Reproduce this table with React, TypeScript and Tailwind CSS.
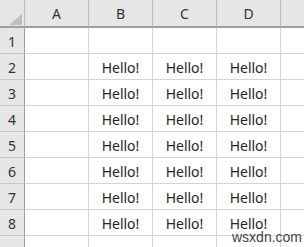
import React from "react";

const cols = ["A", "B", "C", "D"];
const rows = [1, 2, 3, 4, 5, 6, 7, 8];

const App: React.FC = () => {
  return (
    <div className="relative w-[304px] h-[247px] overflow-hidden bg-white font-['Noto_Sans',sans-serif] text-[#262626]">
      <div className="grid grid-cols-[25px_64px_64px_64px_64px_40px]">
        {/* header row */}
        <div className="relative h-[28px] bg-[#e6e6e6] border-r border-r-[#bcbcbc] border-b-2 border-b-[#9e9e9e]">
          <div className="absolute right-[2px] bottom-[1px] w-0 h-0 border-l-[13px] border-l-transparent border-b-[11px] border-b-[#bfbfbf]" />
        </div>
        {cols.map((c) => (
          <div
            key={c}
            className="h-[28px] bg-[#e6e6e6] border-r border-r-[#bcbcbc] border-b-2 border-b-[#9e9e9e] flex items-center justify-center text-[14px] text-[#333]"
          >
            {c}
          </div>
        ))}
        <div className="h-[28px] bg-[#e6e6e6] border-b-2 border-b-[#9e9e9e]" />

        {rows.map((r) => (
          <React.Fragment key={r}>
            <div className="h-[26px] bg-[#e6e6e6] border-r border-r-[#9e9e9e] border-b border-b-[#c6c6c6] flex items-center justify-center pt-[2px] text-[14px] text-[#333]">
              {r}
            </div>
            <div className="h-[26px] border-r border-b border-[#d4d4d4]" />
            {["B", "C", "D"].map((c) => (
              <div
                key={c}
                className="h-[26px] border-r border-b border-[#d4d4d4] flex items-center justify-center pt-[2px] text-[14px]"
              >
                {r === 1 ? "" : "Hello!"}
              </div>
            ))}
            <div className="h-[26px] border-b border-[#d4d4d4]" />
          </React.Fragment>
        ))}

        <div className="h-[26px] bg-[#e6e6e6] border-r border-r-[#9e9e9e]" />
        <div className="h-[26px] border-r border-[#d4d4d4]" />
        <div className="h-[26px] border-r border-[#d4d4d4]" />
        <div className="h-[26px] border-r border-[#d4d4d4]" />
        <div className="h-[26px] border-r border-[#d4d4d4]" />
        <div className="h-[26px]" />
      </div>
      <div className="absolute left-[232px] top-[227px] text-[14px] text-[#444] font-['Liberation_Sans',sans-serif]">
        wsxdn.com
      </div>
    </div>
  );
};

export default App;
